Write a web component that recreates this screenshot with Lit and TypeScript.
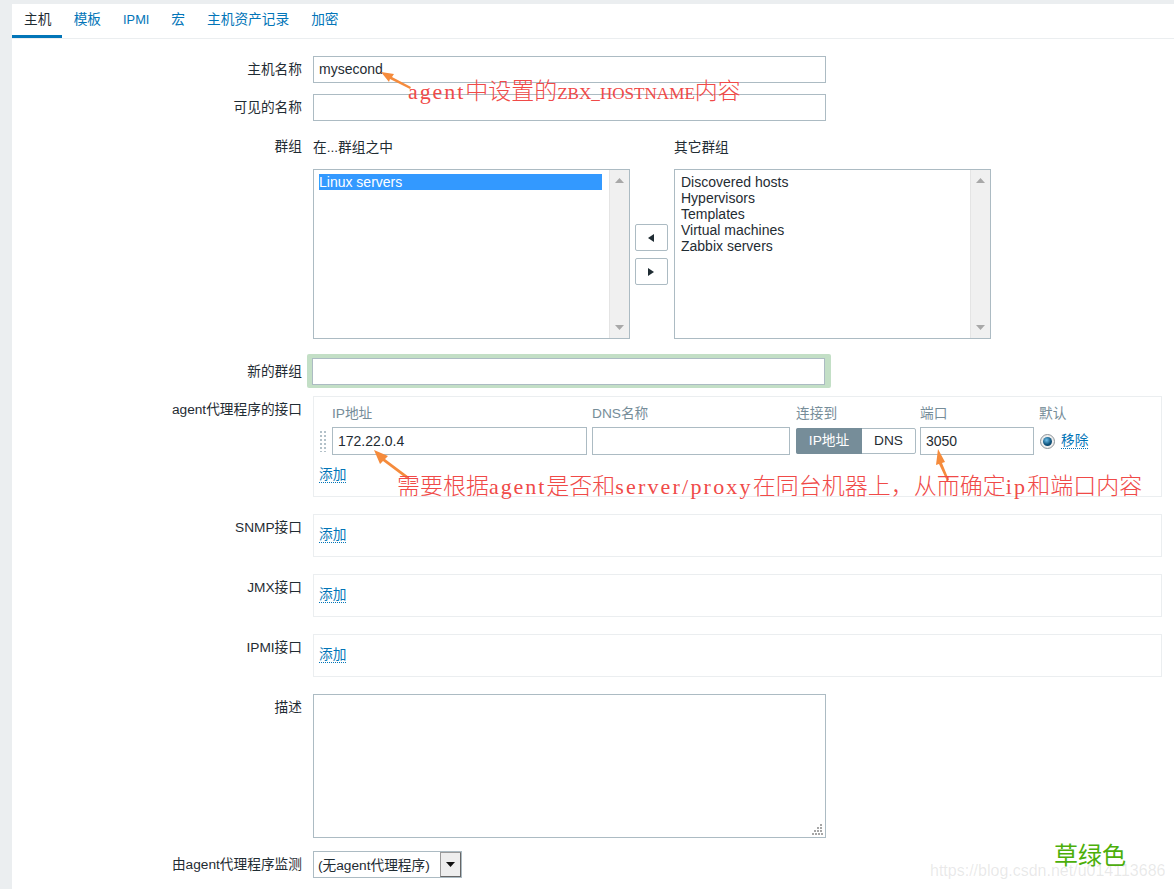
import { LitElement, html, css } from 'lit';
import { customElement } from 'lit/decorators.js';

const tabs = ['主机', '模板', 'IPMI', '宏', '主机资产记录', '加密'];
const otherGroups = ['Discovered hosts', 'Hypervisors', 'Templates', 'Virtual machines', 'Zabbix servers'];
const emptyInterfaces = ['SNMP接口', 'JMX接口', 'IPMI接口'];

@customElement('app-root')
export class AppRoot extends LitElement {
  static styles = css`
    :host {
      display: block;
      position: relative;
      height: 889px;
      overflow: hidden;
      padding: 4px 0 0 12px;
      box-sizing: border-box;
      background: #ebeef0;
      color: #1f2c33;
      font: 13.7px/16px 'Liberation Sans', 'Noto Sans CJK SC', sans-serif;
    }
    .panel {
      background: #fff;
      height: 885px;
    }
    .tabs {
      display: flex;
      height: 34px;
      border-bottom: 1px solid #ebeef0;
    }
    .tab {
      padding: 8px 10.3px 0 11.7px;
      height: 26px;
      color: #0275b8;
      line-height: 16px;
    }
    .tab.latin {
      font-size: 12.8px;
    }
    .tab.active {
      color: #1f2c33;
      padding: 8px 10.6px 0 12px;
      border-bottom: 3px solid #0275b8;
      height: 23px;
    }
    .form {
      padding-top: 17px;
    }
    .row {
      display: grid;
      grid-template-columns: 290px 1fr;
      column-gap: 11px;
    }
    .gap8 { margin-top: 8px; }
    .gap11 { margin-top: 11px; }
    .gap13 { margin-top: 13px; }
    .gap15 { margin-top: 15px; }
    .gap17 { margin-top: 17px; }
    .gap18 { margin-top: 18px; }
    .label {
      text-align: right;
      padding-top: 6px;
    }
    .label.flush {
      padding-top: 0;
    }
    .label.tall {
      padding-top: 10px;
    }
    .input {
      box-sizing: border-box;
      display: block;
      height: 27px;
      width: 513px;
      padding: 0 5px;
      border: 1px solid #acbbc3;
      background: #fff;
      font-size: 14px;
      line-height: 25px;
      white-space: nowrap;
    }
    .groups {
      display: flex;
      width: 678px;
    }
    .group-col {
      width: 317px;
      flex: none;
    }
    .group-title {
      height: 29px;
      padding-top: 1px;
    }
    .listbox {
      box-sizing: border-box;
      display: flex;
      height: 170px;
      border: 1px solid #acbbc3;
      font-size: 14px;
      line-height: 16px;
    }
    .list-items {
      flex: 1;
      padding: 4px 7px 0 5px;
    }
    .list-items.other {
      padding-left: 6px;
    }
    .list-item.selected {
      background: #3399ff;
      color: #fff;
    }
    .scrollbar {
      width: 20px;
      background: #f0f0f0;
      border-left: 1px solid #e4e4e4;
      display: flex;
      flex-direction: column;
      justify-content: space-between;
      align-items: center;
      padding: 8px 0;
      box-sizing: border-box;
    }
    .movers {
      width: 44px;
      flex: none;
      display: flex;
      flex-direction: column;
      align-items: center;
      gap: 7px;
      padding: 48px 2px 0 0;
      box-sizing: border-box;
    }
    .mover-gap {
      height: 30px;
    }
    .mover {
      box-sizing: border-box;
      width: 33px;
      height: 27px;
      border: 1px solid #acbbc3;
      border-radius: 2px;
      display: flex;
      align-items: center;
      justify-content: center;
    }
    .highlight {
      box-sizing: border-box;
      width: 524px;
      height: 34px;
      margin-left: -6px;
      padding: 4px 5px;
      background: #c3dfc6;
      border-radius: 2px;
    }
    .box {
      box-sizing: border-box;
      width: 849px;
      border: 1px solid #ebeef0;
      padding: 12px 5px 0;
    }
    .box.small {
      height: 43px;
    }
    .box.main {
      height: 101px;
      padding: 3px 6px 0;
    }
    .link {
      display: inline-block;
      color: #0275b8;
      line-height: 15px;
      border-bottom: 1px dotted #0275b8;
    }
    .if-grid {
      display: grid;
      grid-template-columns: 12px 255px 203px 126px 118px auto;
      align-items: center;
    }
    .if-head {
      color: #768d99;
      height: 27px;
    }
    .if-grid .input {
      width: auto;
      height: 28px;
      line-height: 26px;
    }
    .cell-dns { margin-left: 5px; }
    .cell-conn { margin-left: 6px; }
    .cell-port { margin-left: 4px; }
    .cell-default { margin-left: 5px; }
    .handle {
      width: 8px;
      height: 22px;
      margin-left: -1px;
      background-image: radial-gradient(#b3c1c9 1.3px, transparent 1.4px);
      background-size: 4px 4px;
    }
    .toggle {
      box-sizing: border-box;
      display: flex;
      width: 120px;
      height: 26px;
      border: 1px solid #acbbc3;
      border-radius: 2px;
      line-height: 24px;
      text-align: center;
      margin-left: 6px;
    }
    .toggle .on {
      width: 66px;
      margin: -1px 0 -1px -1px;
      line-height: 26px;
      background: #768d99;
      color: #fff;
      border-radius: 2px 0 0 2px;
    }
    .toggle .off {
      flex: 1;
    }
    .default-cell {
      display: flex;
      align-items: center;
      gap: 6px;
      margin-left: 6px;
    }
    .radio {
      box-sizing: border-box;
      width: 15px;
      height: 15px;
      border-radius: 50%;
      border: 1px solid #8d9499;
      background: #eee;
      display: flex;
      align-items: center;
      justify-content: center;
    }
    .radio span {
      width: 9px;
      height: 9px;
      border-radius: 50%;
      background: radial-gradient(circle at 40% 35%, #6fc0ea 0, #10557f 55%, #06304c 100%);
    }
    .add-main {
      margin: 12px 0 0 -1px;
    }
    .textarea {
      box-sizing: border-box;
      position: relative;
      width: 513px;
      height: 144px;
      border: 1px solid #acbbc3;
    }
    .grip {
      position: absolute;
      right: 2px;
      bottom: 2px;
    }
    .select {
      box-sizing: border-box;
      display: flex;
      width: 149px;
      height: 27px;
      border: 1px solid #acbbc3;
      line-height: 28px;
    }
    .select-text {
      flex: 1;
      padding-left: 4px;
      white-space: nowrap;
    }
    .select-btn {
      box-sizing: border-box;
      width: 21px;
      border: 1px solid #777;
      border-color: #9a9a9a #666 #666 #9a9a9a;
      background: #eee;
      display: flex;
      align-items: center;
      justify-content: center;
    }
    .note {
      position: absolute;
      color: #f04a48;
      font-family: 'Noto Sans CJK SC', sans-serif;
      font-size: 23px;
      font-weight: 300;
      line-height: 28px;
      white-space: nowrap;
    }
    .note b {
      font: 400 22px/28px 'Liberation Serif', serif;
      letter-spacing: 1.9px;
    }
    .note b.caps {
      font-size: 17.1px;
      letter-spacing: 0;
    }
    .note b.wide {
      letter-spacing: 2.2px;
    }
    .note-1 { left: 408px; top: 75px; }
    .note-2 { left: 397px; top: 470px; }
    .arrows {
      position: absolute;
      left: 0;
      top: 0;
      pointer-events: none;
    }
    .grass {
      position: absolute;
      left: 1054px;
      top: 841px;
      color: #4caf0a;
      font-size: 24px;
      line-height: 30px;
    }
    .watermark {
      position: absolute;
      left: 930px;
      top: 861px;
      color: rgba(120, 120, 120, 0.17);
      font-size: 16px;
      line-height: 20px;
      white-space: nowrap;
    }
  `;

  private scrollbar() {
    return html`<div class="scrollbar">
      <svg width="9" height="5"><path d="M0 5 4.500 0 9 5z" fill="#a8a8a8" /></svg>
      <svg width="9" height="5"><path d="M0 0 4.500 5 9 0z" fill="#a8a8a8" /></svg>
    </div>`;
  }

  render() {
    return html`
      <div class="panel">
        <div class="tabs">
          ${tabs.map(
            (t, i) => html`<div class="tab ${i === 0 ? 'active' : ''} ${t === 'IPMI' ? 'latin' : ''}">${t}</div>`
          )}
        </div>
        <div class="form">
          <div class="row">
            <div class="label">主机名称</div>
            <div class="input">mysecond</div>
          </div>
          <div class="row gap11">
            <div class="label">可见的名称</div>
            <div class="input"></div>
          </div>
          <div class="row gap18">
            <div class="label flush">群组</div>
            <div class="groups">
              <div class="group-col">
                <div class="group-title">在...群组之中</div>
                <div class="listbox">
                  <div class="list-items">
                    <div class="list-item selected">Linux servers</div>
                  </div>
                  ${this.scrollbar()}
                </div>
              </div>
              <div class="movers">
                <div class="mover-gap"></div>
                <div class="mover">
                  <svg width="6" height="8"><path d="M6 0v8L0 4z" fill="#1f2c33" /></svg>
                </div>
                <div class="mover">
                  <svg width="6" height="8"><path d="M0 0v8l6-4z" fill="#1f2c33" /></svg>
                </div>
              </div>
              <div class="group-col">
                <div class="group-title">其它群组</div>
                <div class="listbox">
                  <div class="list-items other">
                    ${otherGroups.map((g) => html`<div class="list-item">${g}</div>`)}
                  </div>
                  ${this.scrollbar()}
                </div>
              </div>
            </div>
          </div>
          <div class="row gap15">
            <div class="label tall">新的群组</div>
            <div class="highlight"><div class="input"></div></div>
          </div>
          <div class="row gap8">
            <div class="label">agent代理程序的接口</div>
            <div class="box main">
              <div class="if-grid if-head">
                <div></div>
                <div>IP地址</div>
                <div class="cell-dns">DNS名称</div>
                <div class="cell-conn">连接到</div>
                <div class="cell-port">端口</div>
                <div class="cell-default">默认</div>
              </div>
              <div class="if-grid">
                <div class="handle"></div>
                <div class="input">172.22.0.4</div>
                <div class="input cell-dns"></div>
                <div class="toggle"><div class="on">IP地址</div><div class="off">DNS</div></div>
                <div class="input cell-port">3050</div>
                <div class="default-cell">
                  <div class="radio"><span></span></div>
                  <span class="link">移除</span>
                </div>
              </div>
              <div class="add-main"><span class="link">添加</span></div>
            </div>
          </div>
          ${emptyInterfaces.map(
            (name) => html`<div class="row gap17">
              <div class="label">${name}</div>
              <div class="box small"><span class="link">添加</span></div>
            </div>`
          )}
          <div class="row gap17">
            <div class="label">描述</div>
            <div class="textarea">
              <svg class="grip" width="11" height="11">
                <path
                  d="M8 0h2v2H8zM5 3h2v2H5zM8 3h2v2H8zM2 6h2v2H2zM5 6h2v2H5zM8 6h2v2H8zM0 9h2v2H0zM3 9h2v2H3zM6 9h2v2H6zM9 9h2v2H9z"
                  fill="#a6a6a6"
                />
              </svg>
            </div>
          </div>
          <div class="row gap13">
            <div class="label">由agent代理程序监测</div>
            <div class="select">
              <div class="select-text">(无agent代理程序)</div>
              <div class="select-btn">
                <svg width="9" height="5"><path d="M0 0h9L4.500 5z" fill="#111" /></svg>
              </div>
            </div>
          </div>
        </div>
      </div>

      <svg class="arrows" width="1174" height="889">
        <g fill="#f58b3c">
          <path d="M381 72 394 74 392 77 411 87 410 89 390 79 389 82z" />
          <path d="M374 450 388 456 385 459 409 477 407 479 383 461 380 464z" />
          <path d="M938 449 945 462 942 463 949 480 947 481 939 464 936 465z" />
        </g>
      </svg>
      <div class="note note-1"><b>agent</b>中设置的<b class="caps">ZBX_HOSTNAME</b>内容</div>
      <div class="note note-2">
        需要根据<b>agent</b>是否和<b class="wide">server/proxy</b>在同台机器上，从而确定<b class="wide">ip</b>和端口内容
      </div>
      <div class="grass">草绿色</div>
      <div class="watermark">https://blog.csdn.net/u014113686</div>
    `;
  }
}

declare global {
  interface HTMLElementTagNameMap {
    'app-root': AppRoot;
  }
}
